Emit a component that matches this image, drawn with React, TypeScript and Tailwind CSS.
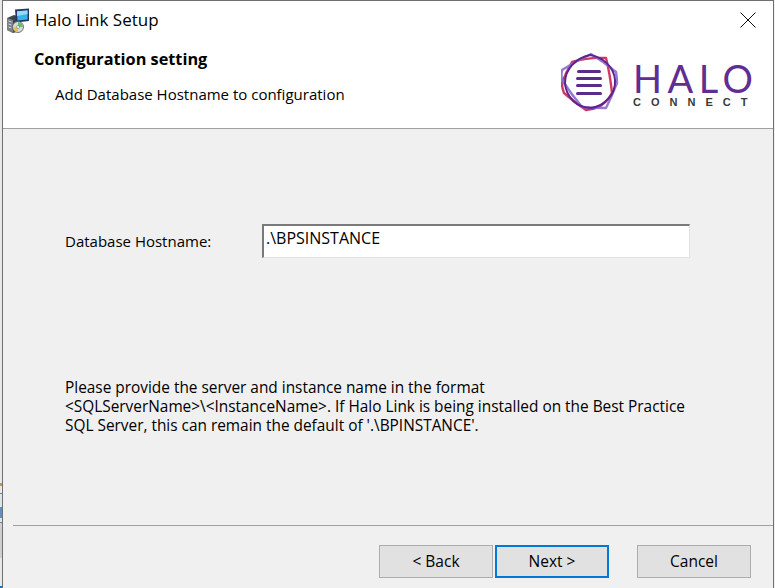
const font = { fontFamily: '"Open Sans", "Noto Sans", sans-serif' }

function InstallerIcon() {
  return (
    <svg width="24" height="25" viewBox="0 0 24 25" className="shrink-0">
      {/* tower */}
      <path d="M1 10 L8 7 L14 9 L14 23 L7 25 L1 22 Z" fill="#3f444c" />
      <path d="M1 10 L7 12 L7 25 L1 22 Z" fill="#7b8088" />
      <path d="M2.5 13 L5.5 14 M2.5 16 L5.5 17 M2.5 19 L5.5 20" stroke="#dfe2e6" strokeWidth="0.9" />
      {/* monitor */}
      <path d="M9 1.5 L23 0.5 L23 13 L10 14.5 Z" fill="#26375f" />
      <path d="M11 3.2 L21.5 2.5 L21.5 11.5 L11.5 12.6 Z" fill="#37b3ec" />
      <path d="M11 3.2 L21.5 2.5 L21.5 6 L11 8 Z" fill="#8fdcf8" />
      {/* disc */}
      <circle cx="12" cy="19" r="5.5" fill="#d5dadf" stroke="#4f5862" strokeWidth="0.8" />
      <path d="M12 19 L12 14.2 A4.8 4.8 0 0 1 16.8 19 Z" fill="#63c25c" />
      <path d="M12 19 L7.2 19 A4.8 4.8 0 0 0 12 23.8 Z" fill="#e6c53a" />
      <circle cx="12" cy="19" r="1.5" fill="#ffffff" stroke="#4f5862" strokeWidth="0.5" />
    </svg>
  )
}

function HaloLogo() {
  return (
    <div className="flex items-start">
      <svg width="58" height="60" viewBox="0 0 58 60" className="shrink-0">
        <path d="M11 10 Q28 5 45 6 Q49 22 51 41 Q46 50 38 55 Q31 58 25 58 Q13 50 3 41 Q1 36 1 31 Q5 20 11 10 Z" fill="none" stroke="#d03a62" strokeWidth="2.4" strokeLinejoin="round" />
        <path d="M30 2 Q43 10 55 20 Q56 26 56 31 Q51 44 45 56 Q33 56 21 55 Q10 42 1 28 Q0 23 1 18 Q15 9 30 2 Z" fill="none" stroke="#8a6ccf" strokeWidth="2.4" strokeLinejoin="round" opacity="0.9" />
        <path d="M29 3 C42 5 53 15 54 28 C55 42 44 54 30 56 C16 56 5 45 4 31 C4 17 15 6 29 3 Z" fill="none" stroke="#5b2590" strokeWidth="2" />
        <g fill="#5a2a8f">
          <rect x="16" y="18" width="24" height="3" rx="1.5" />
          <rect x="15" y="25" width="26" height="3" rx="1.5" />
          <rect x="15" y="32" width="26" height="3" rx="1.5" />
          <rect x="15" y="40" width="26" height="3" rx="1.5" />
        </g>
      </svg>
      <div className="ml-[14px] mt-[9px] flex w-[120px] flex-col">
        <span
          className="text-[38px] leading-[34px] tracking-[5.5px] text-[#5f2d93]"
          style={{ fontFamily: 'Lato, sans-serif' }}
        >
          HALO
        </span>
        <span
          className="mt-[1px] text-[11px] leading-[12px] font-bold tracking-[10px] text-[#3a3a3a]"
          style={{ fontFamily: '"Liberation Sans", sans-serif' }}
        >
          CONNECT
        </span>
      </div>
    </div>
  )
}

function WizardButton({ label, focused }: { label: string; focused?: boolean }) {
  return (
    <button
      className={`h-[33px] w-[114px] bg-[#e1e1e1] text-[15.5px] text-black ${
        focused ? 'border-2 border-[#0078d7]' : 'border border-[#adadad]'
      }`}
    >
      {label}
    </button>
  )
}

export default function App() {
  return (
    <div className="flex h-[588px] w-[775px] overflow-hidden bg-[#f0f0f0]" style={font}>
      {/* sliver of the desktop behind the window */}
      <div className="flex w-[2px] shrink-0 flex-col bg-[#e8e8e8]">
        <div className="h-[483px]" />
        <div className="h-[3px] bg-[#d9912e]" />
        <div className="h-[7px]" />
        <div className="h-[1px] bg-[#808080]" />
        <div className="h-[13px] bg-[#dde3ea]" />
        <div className="h-[11px] bg-[#5f8fc4]" />
        <div className="h-[4px] bg-[#dde3ea]" />
        <div className="h-[1px] bg-[#808080]" />
        <div className="h-[35px] bg-[#cfcfcf]" />
        <div className="h-[28px]" />
        <div className="h-[2px] bg-[#0078d7]" />
      </div>

      <div className="flex w-[772px] flex-col border-t border-l border-r border-[#707070]">
        {/* title bar + banner */}
        <div className="flex h-[128px] shrink-0 flex-col border-b border-[#a0a0a0] bg-white">
          <div className="flex h-[38px] items-center pl-[3px]">
            <InstallerIcon />
            <span className="ml-[5px] text-[17px] text-black">Halo Link Setup</span>
            <svg width="16" height="16" viewBox="0 0 16 16" className="ml-auto mr-[17px]">
              <path d="M0.5 0.5 L15.5 15.5 M15.5 0.5 L0.5 15.5" stroke="#111" strokeWidth="1" fill="none" />
            </svg>
          </div>
          <div className="flex items-start justify-between pr-[20px]">
            <div className="pt-[9px] pl-[31px]">
              <div className="text-[16.3px] leading-[22px] font-bold text-black">Configuration setting</div>
              <div className="mt-[14px] pl-[21px] text-[15px] leading-[20px] text-black">
                Add Database Hostname to configuration
              </div>
            </div>
            <div className="mt-[13px]">
              <HaloLogo />
            </div>
          </div>
        </div>

        {/* form body */}
        <div className="flex flex-1 flex-col">
          <div className="mt-[95px] flex items-start pl-[62px]">
            <label className="mt-[7px] w-[197px] text-[15px] leading-[20px] text-black">Database Hostname:</label>
            <div className="h-[34px] w-[428px] border-t-2 border-l-2 border-t-[#7a7a7a] border-l-[#7a7a7a] border-b border-r border-b-[#e3e3e3] border-r-[#e3e3e3] bg-white pt-[2px] pl-[2px] text-[16px] leading-[20px] text-black">
              .\BPSINSTANCE
            </div>
          </div>

          <p className="mt-[120px] whitespace-nowrap pl-[62px] text-[15.4px] leading-[19px] text-black">
            Please provide the server and instance name in the format
            <br />
            &lt;SQLServerName&gt;\&lt;InstanceName&gt;. If Halo Link is being installed on the Best Practice
            <br />
            SQL Server, this can remain the default of '.\BPINSTANCE'.
          </p>

          <div className="mt-auto ml-[10px] border-t border-[#a0a0a0]">
            <div className="flex items-center pt-[19px] pb-[10px] pl-[366px]">
              <WizardButton label="< Back" />
              <div className="ml-[2px]">
                <WizardButton label="Next >" focused />
              </div>
              <div className="ml-[28px]">
                <WizardButton label="Cancel" />
              </div>
            </div>
          </div>
        </div>
      </div>
    </div>
  )
}
